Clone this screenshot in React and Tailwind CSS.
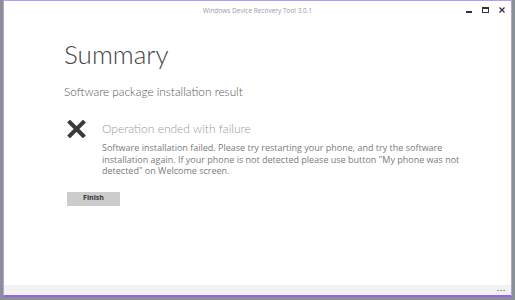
import React from "react";

const App = () => {
  return (
    <div className="w-[515px] h-[300px] bg-[#8a9191] pl-[3px] pr-[3px] pb-[3px] flex overflow-hidden" style={{ fontFamily: '"Open Sans", "Noto Sans", sans-serif' }}>
      <div className="flex-1 flex flex-col bg-white border border-[#b79cf0] border-b-2 border-b-[#9a62e6]">
        {/* Title bar */}
        <div className="relative h-[20px] flex items-center justify-center">
          <span className="text-[6.5px] text-[#9a9a9a]">Windows Device Recovery Tool 3.0.1</span>
          <div className="absolute right-[6px] top-[6px] flex items-center gap-[10px] text-[#333]">
            <svg width="6" height="6" viewBox="0 0 6 6"><rect x="0" y="4" width="6" height="2" fill="#333" /></svg>
            <svg width="7" height="6" viewBox="0 0 7 6"><rect x="0.5" y="0.5" width="6" height="5" fill="none" stroke="#333" /><rect x="0" y="0" width="7" height="2" fill="#333" /></svg>
            <svg width="6" height="6" viewBox="0 0 6 6"><path d="M0.5 0.5 L5.5 5.5 M5.5 0.5 L0.5 5.5" stroke="#333" strokeWidth="1.3" /></svg>
          </div>
        </div>

        {/* Content */}
        <div className="flex-1 pl-[60px] pt-[17px]">
          <h1 className="text-[26px] font-light text-[#444] leading-[32px]" style={{ fontFamily: 'Lato, sans-serif' }}>Summary</h1>
          <p className="mt-[14px] text-[11.8px] font-light text-[#555] leading-[16px]" style={{ fontFamily: 'Lato, sans-serif' }}>Software package installation result</p>

          <div className="mt-[19px] flex items-start">
            <svg width="19" height="18" viewBox="0 0 19 18" className="ml-[3px] mt-[1px]">
              <path d="M3 2.5 L16 15.5 M16 2.5 L3 15.5" stroke="#3a3a3a" strokeWidth="4" strokeLinecap="square" />
            </svg>
            <div className="ml-[16px]">
              <p className="text-[12px] font-light text-[#999] leading-[20px]" style={{ fontFamily: 'Lato, sans-serif' }}>Operation ended with failure</p>
              <p className="mt-[3px] w-[362px] text-[9px] text-[#7a7a7a] leading-[11.5px]">
                Software installation failed. Please try restarting your phone, and try the software installation again. If your phone is not detected please use button "My phone was not detected" on Welcome screen.
              </p>
            </div>
          </div>

          <button className="mt-[15px] ml-[3px] w-[53px] h-[14px] bg-[#cccccc] text-[7px] font-bold text-[#333] flex items-center justify-center">Finish</button>
        </div>

        {/* Footer */}
        <div className="h-[10px] bg-[#f2f2f2] flex items-center justify-end pr-[5px]">
          <span className="text-[7px] leading-none text-[#444] tracking-[1px] font-bold -mt-[3px]">...</span>
        </div>
      </div>
    </div>
  );
};

export default App;
